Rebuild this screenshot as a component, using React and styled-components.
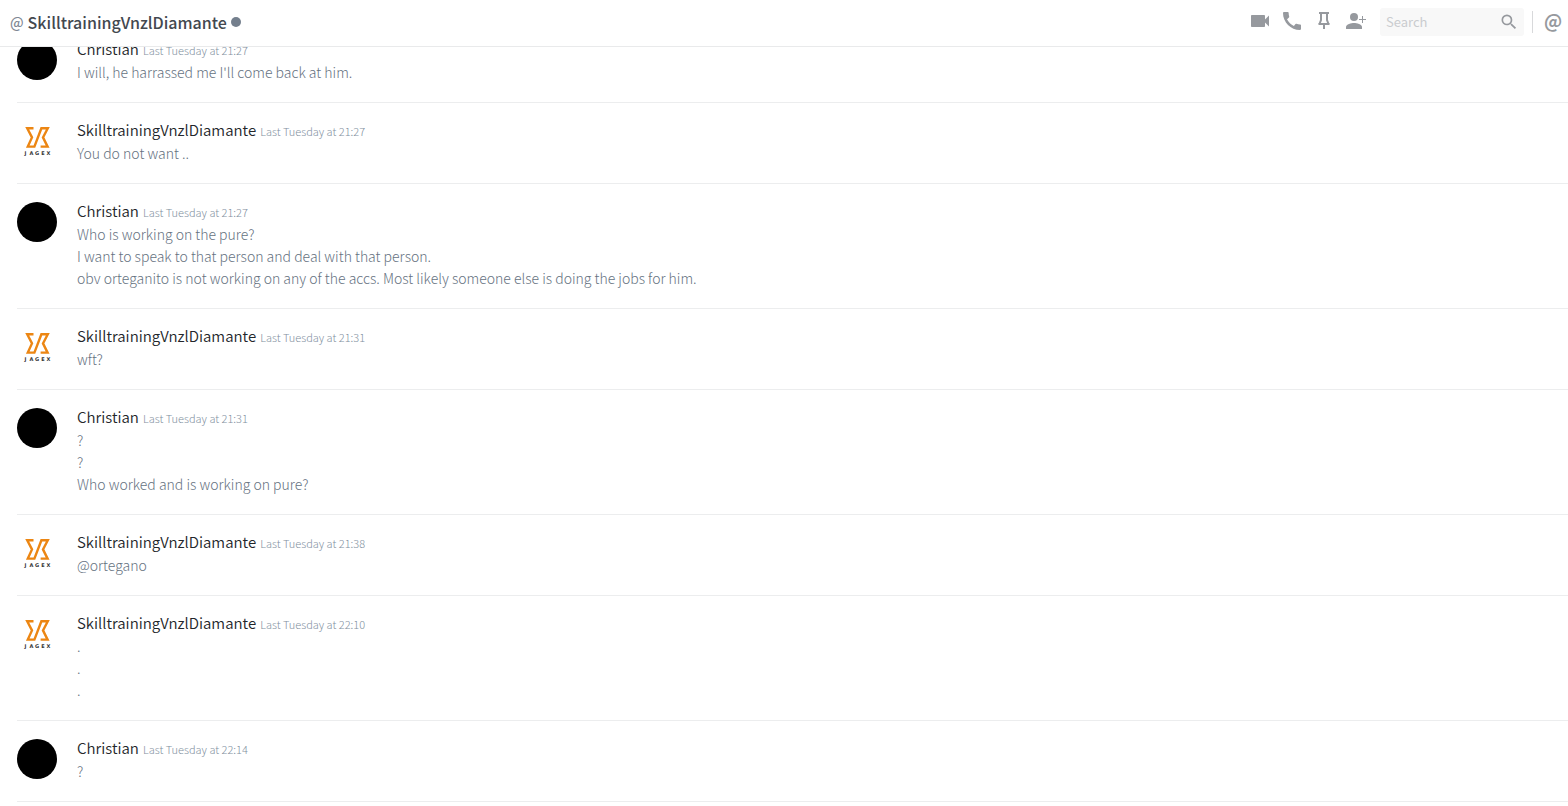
import React from "react";
import styled, { createGlobalStyle } from "styled-components";
import { MdCall, MdSearch, MdVideocam } from "react-icons/md";

const GlobalStyle = createGlobalStyle`
	* {
		box-sizing: border-box;
	}

	body {
		margin: 0;
		background: #fff;
		font-family: "Noto Sans CJK SC", "Noto Sans", sans-serif;
	}
`;

const Page = styled.div`
	display: flex;
	flex-direction: column;
	height: 100vh;
`;

const Header = styled.header`
	display: flex;
	flex: none;
	align-items: center;
	justify-content: space-between;
	height: 47px;
	padding: 0 3px 2px 10px;
	border-bottom: 1px solid #e9eaeb;
`;

const Title = styled.h1`
	display: flex;
	align-items: center;
	gap: 4px;
	margin: 0;
	font-size: 16px;
	line-height: 24px;
	font-weight: 500;
	color: #43484f;

	.at {
		font-size: 14px;
		color: #7f8894;
	}
`;

const Status = styled.span`
	width: 10px;
	height: 10px;
	border-radius: 50%;
	background: #747f8d;
`;

const Toolbar = styled.div`
	display: flex;
	align-items: center;
`;

const Tools = styled.div`
	display: flex;
	gap: 8px;
	padding-bottom: 2px;
`;

const IconButton = styled.button`
	display: flex;
	align-items: center;
	justify-content: center;
	width: 24px;
	height: 24px;
	padding: 0;
	border: 0;
	background: none;
	color: #96999e;
	cursor: pointer;
`;

const MentionsButton = styled(IconButton)`
	align-items: flex-start;
	font-family: inherit;
	font-size: 18px;
	line-height: 20px;
	font-weight: 700;
`;

const SearchBox = styled.label`
	display: flex;
	align-items: center;
	width: 144px;
	height: 28px;
	margin: 0 8px 0 12px;
	padding: 0 5px 0 6px;
	border-radius: 3px;
	background: #f8f8f8;
	color: #96999e;

	input {
		flex: 1;
		min-width: 0;
		padding: 0;
		border: 0;
		outline: 0;
		background: none;
		color: #4f545c;
		font-family: inherit;
		font-size: 13px;
		line-height: 20px;
	}

	input::placeholder {
		color: #cacccf;
		opacity: 1;
	}
`;

const Divider = styled.span`
	width: 1px;
	height: 22px;
	margin-right: 8px;
	background: #d8d9db;
`;

/* column-reverse keeps the newest message in view */
const Scroller = styled.main`
	display: flex;
	flex: 1;
	flex-direction: column-reverse;
	min-height: 0;
	padding: 0 0 4px 17px;
	overflow-y: auto;
	scrollbar-width: none;
`;

const MessageGroup = styled.article`
	display: flex;
	gap: 20px;
	padding: 18px 0 19px;
	border-bottom: 1px solid #ecedee;
`;

const Avatar = styled.div`
	flex: none;
	width: 40px;
	height: 40px;
	border-radius: 50%;
	overflow: hidden;
	background: ${(props) => props.$dark ? "#000" : "#fff"};
`;

const MessageHead = styled.div`
	display: flex;
	align-items: baseline;
	gap: 4px;
	height: 21px;
	line-height: 18px;

	h2 {
		margin: 0;
		font-size: 15px;
		font-weight: 350;
		color: #23262a;
	}

	time {
		font-size: 11px;
		font-weight: 300;
		color: #8290a0;
	}
`;

const MessageText = styled.p`
	margin: 0;
	font-size: 14px;
	line-height: 22px;
	font-weight: 300;
	color: #66727f;
`;

const JagexLogo = () => {
	return (
		<svg width="40" height="40" viewBox="0 0 40 40" role="img" aria-label="Jagex">
			<path
				d="M16.500 7.200H10.200L15 16.400 10.800 25.600h6.600L24.400 7.200H30.800L26 16.400l4.600 9.200H23.600"
				fill="none"
				stroke="#ec8613"
				strokeWidth="2.400"
			/>
			<text
				x="7.500 12.400 18 24.200 29.600"
				y="34"
				fontFamily="DejaVu Sans"
				fontSize="5"
				fontWeight="700"
				fill="#333"
			>
				JAGEX
			</text>
		</svg>
	);
};

const PinIcon = () => {
	return (
		<svg width="24" height="24" viewBox="0 0 24 24" fill="none" stroke="currentColor">
			<path d="M7 4h10M6.500 15h11" strokeWidth="2" />
			<path d="M9 4v7l-1.500 4M15 4v7l1.500 4" strokeWidth="2" />
			<path d="M12 15v5" strokeWidth="2" />
		</svg>
	);
};

const AddFriendIcon = () => {
	return (
		<svg width="24" height="24" viewBox="0 0 24 24" fill="currentColor">
			<circle cx="10" cy="8" r="4" />
			<path d="M2 20v-2c0-2.700 5.300-4 8-4s8 1.300 8 4v2z" />
			<path d="M18.500 7v7M15 10.500h7" stroke="currentColor" />
		</svg>
	);
};

const messages = [
	{
		id: 1,
		author: "Christian",
		time: "21:27",
		lines: ["I will, he harrassed me I'll come back at him."],
	},
	{
		id: 2,
		author: "SkilltrainingVnzlDiamante",
		time: "21:27",
		lines: ["You do not want .."],
	},
	{
		id: 3,
		author: "Christian",
		time: "21:27",
		lines: [
			"Who is working on the pure?",
			"I want to speak to that person and deal with that person.",
			"obv orteganito is not working on any of the accs. Most likely someone else is doing the jobs for him.",
		],
	},
	{ id: 4, author: "SkilltrainingVnzlDiamante", time: "21:31", lines: ["wft?"] },
	{
		id: 5,
		author: "Christian",
		time: "21:31",
		lines: ["?", "?", "Who worked and is working on pure?"],
	},
	{ id: 6, author: "SkilltrainingVnzlDiamante", time: "21:38", lines: ["@ortegano"] },
	{ id: 7, author: "SkilltrainingVnzlDiamante", time: "22:10", lines: [".", ".", "."] },
	{ id: 8, author: "Christian", time: "22:14", lines: ["?"] },
];

const Message = ({ author, time, lines }) => {
	const isChristian = author === "Christian";

	return (
		<MessageGroup>
			<Avatar $dark={isChristian}>{!isChristian && <JagexLogo />}</Avatar>
			<div>
				<MessageHead>
					<h2>{author}</h2>
					<time>Last Tuesday at {time}</time>
				</MessageHead>
				{lines.map((line, index) => {
					return <MessageText key={index}>{line}</MessageText>;
				})}
			</div>
		</MessageGroup>
	);
};

const App = () => {
	return (
		<Page>
			<GlobalStyle />
			<Header>
				<Title>
					<span className="at">@</span>
					SkilltrainingVnzlDiamante
					<Status title="Offline" />
				</Title>
				<Toolbar>
					<Tools>
						<IconButton aria-label="Start video call">
							<MdVideocam size={24} />
						</IconButton>
						<IconButton aria-label="Start voice call">
							<MdCall size={24} />
						</IconButton>
						<IconButton aria-label="Pinned messages">
							<PinIcon />
						</IconButton>
						<IconButton aria-label="Add friends">
							<AddFriendIcon />
						</IconButton>
					</Tools>
					<SearchBox>
						<input type="text" placeholder="Search" aria-label="Search" />
						<MdSearch size={20} />
					</SearchBox>
					<Divider />
					<MentionsButton aria-label="Mentions">@</MentionsButton>
				</Toolbar>
			</Header>
			<Scroller>
				<div>
					{messages.map((item) => {
						return <Message key={item.id} {...item} />;
					})}
				</div>
			</Scroller>
		</Page>
	);
};

export default App;
